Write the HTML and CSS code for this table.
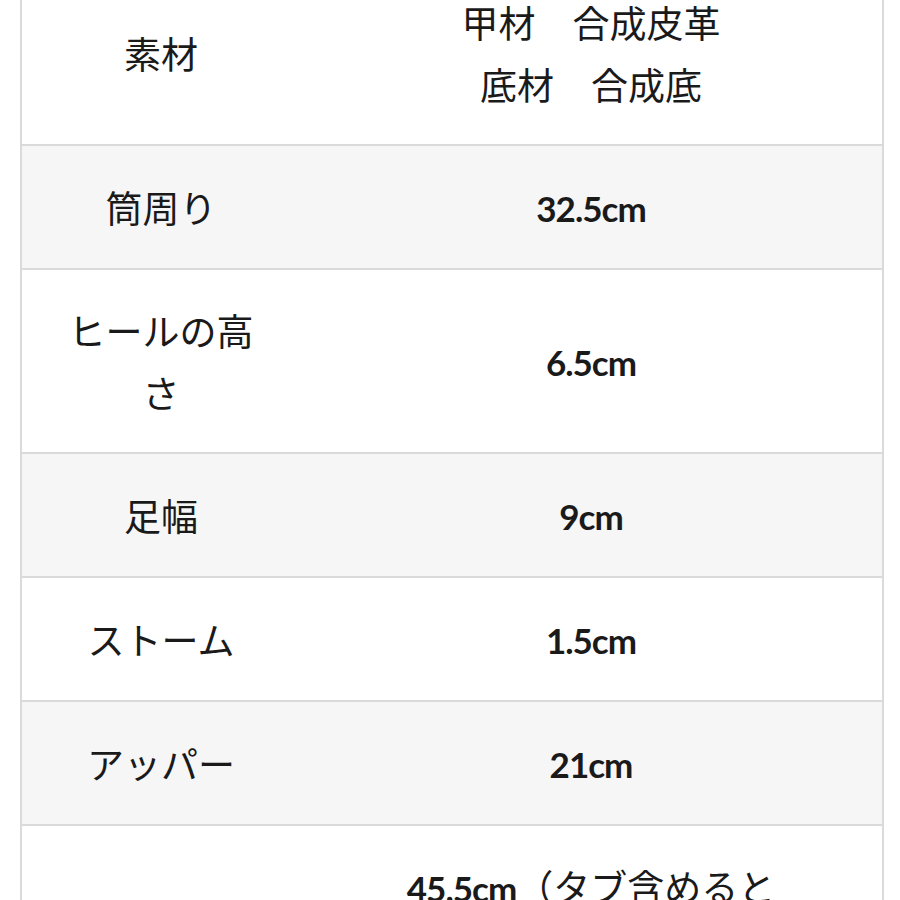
FILE: index.html
```html
<!DOCTYPE html>
<html lang="ja">
<head>
<meta charset="utf-8">
<title>サイズ表</title>
<link rel="stylesheet" href="styles.css">
</head>
<body>
<div class="sheet">
  <table class="spec">
    <tbody>
      <tr>
        <th>素材</th>
        <td>甲材　合成皮革<br>底材　合成底</td>
      </tr>
      <tr class="alt">
        <th>筒周り</th>
        <td><span class="num">32.5cm</span></td>
      </tr>
      <tr>
        <th>ヒールの高さ</th>
        <td><span class="num">6.5cm</span></td>
      </tr>
      <tr class="alt">
        <th>足幅</th>
        <td><span class="num">9cm</span></td>
      </tr>
      <tr>
        <th>ストーム</th>
        <td><span class="num">1.5cm</span></td>
      </tr>
      <tr class="alt">
        <th>アッパー</th>
        <td><span class="num">21cm</span></td>
      </tr>
      <tr>
        <th>総高さ</th>
        <td><span class="num">45.5cm</span>（タブ含めると<span class="num">47cm</span>）</td>
      </tr>
    </tbody>
  </table>
</div>
</body>
</html>
```
FILE: styles.css
```css
html, body {
  margin: 0;
  padding: 0;
  background: #ffffff;
}

body {
  font-family: "Noto Sans CJK JP", "Noto Sans", sans-serif;
  color: #1a1a1a;
  overflow: hidden;
}

.sheet {
  width: 900px;
  height: 900px;
  overflow: hidden;
}

.spec {
  margin: -38px 0 0 20px;
  width: 864px;
  border-collapse: collapse;
  border-left: 2px solid #dadada;
  border-right: 2px solid #dadada;
  table-layout: fixed;
}

.spec th,
.spec td {
  font-weight: 400;
  font-size: 37px;
  line-height: 62px;
  text-align: center;
  vertical-align: middle;
  padding: 29px 35px;
  border-bottom: 2px solid #dadada;
}

.spec th {
  width: 208px;
}

.spec td {
  padding-left: 70px;
  padding-right: 70px;
}

.spec tr.alt th,
.spec tr.alt td {
  background: #f6f6f6;
}

.num {
  font-family: "Lato", "Noto Sans", sans-serif;
  font-weight: 700;
  font-size: 35px;
  letter-spacing: -1px;
}
```
